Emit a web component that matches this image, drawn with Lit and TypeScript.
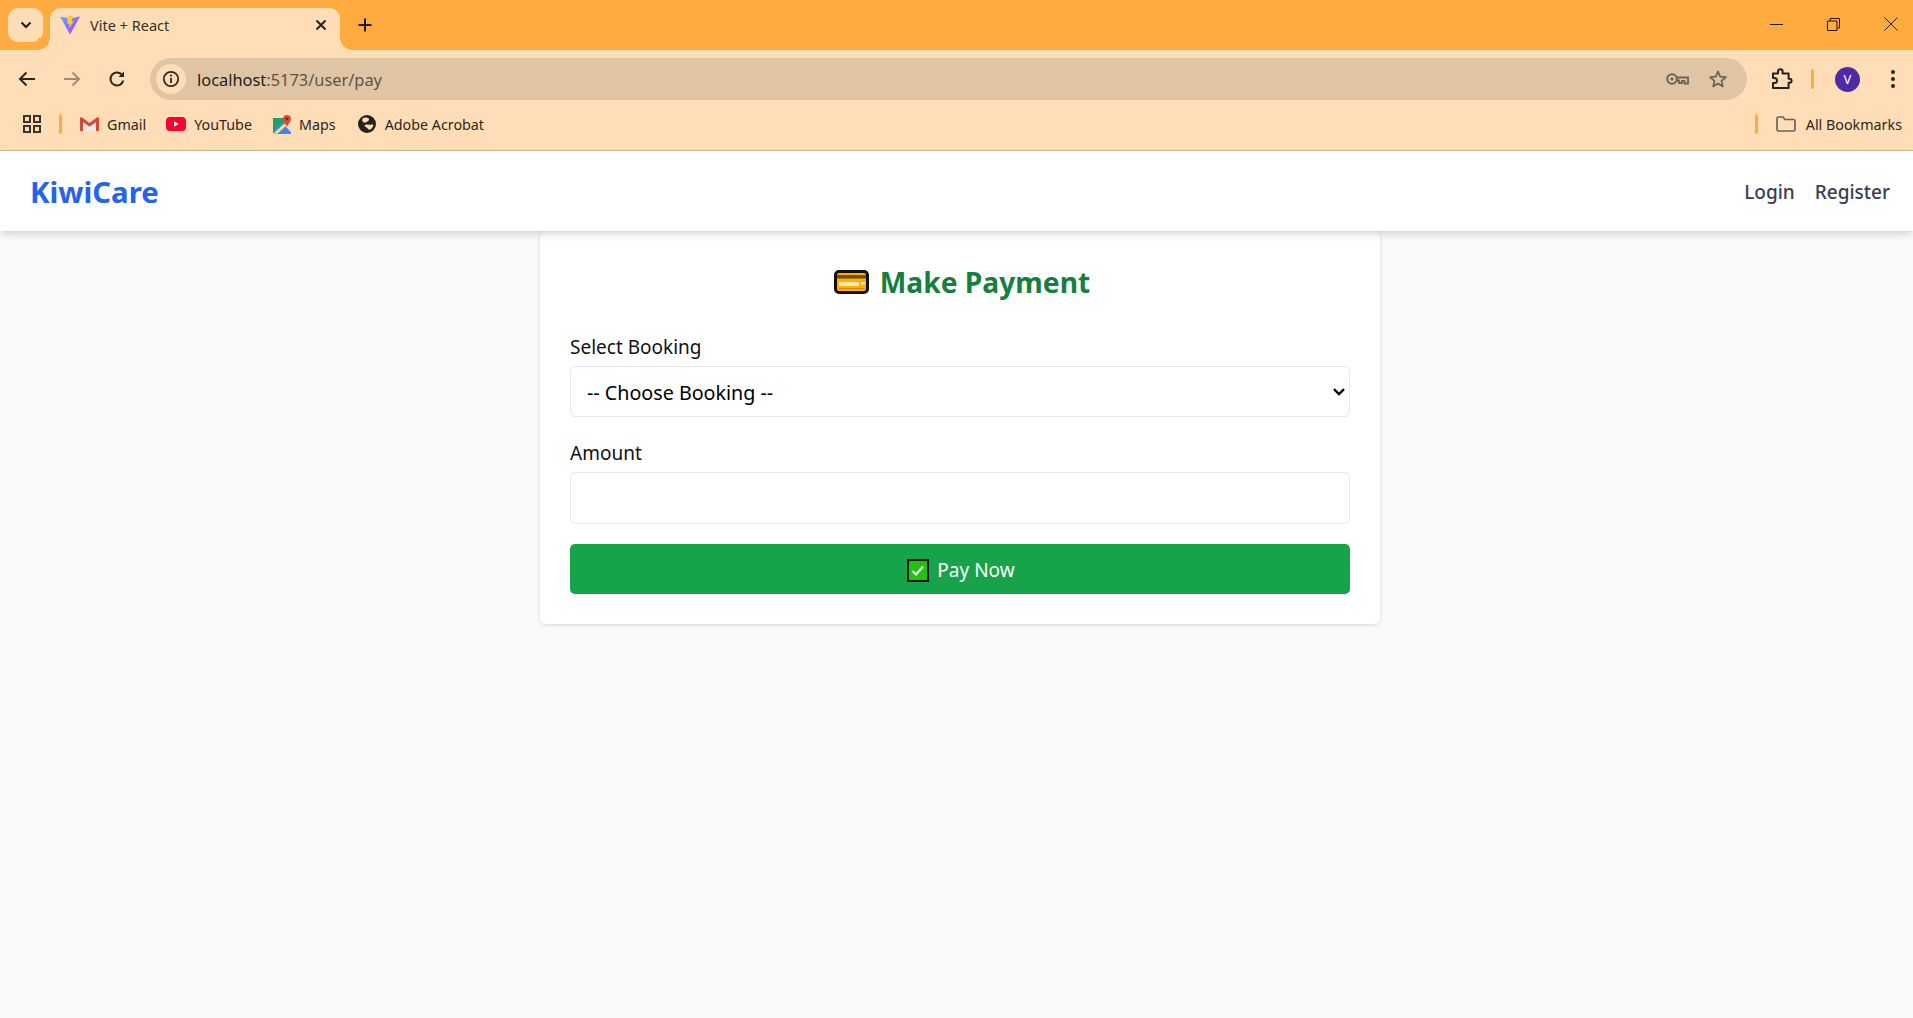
import { html, css, LitElement } from "lit";
import { customElement } from "lit/decorators.js";

@customElement("browser-chrome")
class BrowserChrome extends LitElement {
    static styles = css`
        :host {
            display: block;
            font-family: "Noto Sans", "Open Sans", sans-serif;
            color: #2b2620;
        }

        svg {
            display: block;
            flex: none;
        }

        .strip {
            display: flex;
            align-items: flex-start;
            height: 50px;
            background: #ffab40;
            padding-left: 8px;
            box-sizing: border-box;
        }

        .tab-search {
            display: flex;
            align-items: center;
            justify-content: center;
            width: 35px;
            height: 34px;
            margin-top: 8px;
            border-radius: 10px;
            background: #ffddb6;
        }

        .tab {
            position: relative;
            display: flex;
            align-items: center;
            width: 290px;
            height: 42px;
            margin: 8px 0 0 7px;
            padding: 0 0 8px 10px;
            box-sizing: border-box;
            border-radius: 11px 11px 0 0;
            background: #ffddb6;
        }

        .tab::before,
        .tab::after {
            content: "";
            position: absolute;
            bottom: 0;
            width: 12px;
            height: 12px;
        }

        .tab::before {
            left: -12px;
            background: radial-gradient(circle at 0 0, #ffab40 11.5px, #ffddb6 12px);
        }

        .tab::after {
            right: -12px;
            background: radial-gradient(circle at 100% 0, #ffab40 11.5px, #ffddb6 12px);
        }

        .tab-title {
            flex: 1;
            margin-left: 10px;
            font-size: 14.5px;
            color: #33302b;
        }

        .tab-close {
            margin-right: 13px;
        }

        .new-tab {
            margin: 18px 0 0 18px;
        }

        .window-controls {
            display: flex;
            align-items: center;
            margin: 17px 15px 0 auto;
            gap: 44px;
        }

        .toolbar {
            display: flex;
            align-items: center;
            height: 50px;
            background: #ffddb6;
            padding: 8px 17px 0 17px;
            box-sizing: border-box;
        }

        .nav-icons {
            display: flex;
            align-items: center;
            gap: 25px;
        }

        .omnibox {
            display: flex;
            align-items: center;
            flex: 1;
            height: 42px;
            margin: 0 24px 0 23px;
            border-radius: 21px;
            background: #dfc5a3;
            padding: 0 19px 0 6px;
        }

        .info {
            display: flex;
            align-items: center;
            justify-content: center;
            width: 30px;
            height: 30px;
            border-radius: 50%;
            background: #ffddb6;
        }

        .url {
            flex: 1;
            margin-left: 11px;
            font-size: 16.4px;
            color: #5f5448;
        }

        .url b {
            font-weight: 400;
            color: #24211d;
        }

        .omni-icons {
            display: flex;
            align-items: center;
            gap: 19px;
        }

        .toolbar-divider {
            width: 3px;
            height: 20px;
            margin: 0 21px 0 18px;
            border-radius: 2px;
            background: #ffab40;
        }

        .avatar {
            display: flex;
            align-items: center;
            justify-content: center;
            width: 25px;
            height: 25px;
            margin-right: 30px;
            border-radius: 50%;
            background: #4e2aa5;
            color: #fff;
            font-size: 13px;
        }

        .bookmarks {
            display: flex;
            align-items: center;
            height: 51px;
            padding: 0 11px 2px 23px;
            box-sizing: border-box;
            background: #ffddb6;
            border-bottom: 1px solid #cfb594;
            font-size: 14.3px;
        }

        .bm-divider {
            width: 3px;
            height: 20px;
            border-radius: 2px;
            background: #ffab40;
        }

        .bm-divider.first {
            margin: 0 18px 0 18px;
        }

        .bm-divider.last {
            margin: 0 18px 0 auto;
        }

        .bm {
            display: flex;
            align-items: center;
            gap: 8px;
            margin-right: 20px;
        }

        .bm.youtube {
            margin-right: 21px;
        }

        .bm.maps {
            margin-right: 22px;
        }

        .bm.adobe {
            gap: 9px;
        }

        .bm.all {
            margin: 0;
            gap: 10px;
        }
    `;

    render() {
        return html`
            <div class="strip">
                <div class="tab-search">
                    <svg width="12" height="8" viewBox="0 0 12 8"><path d="M1.500 1.500 6 6l4.500-4.500" fill="none" stroke="#1f1b16" stroke-width="2"/></svg>
                </div>
                <div class="tab">
                    <svg width="20" height="20" viewBox="0 0 20 20">
                        <defs>
                            <linearGradient id="vite" x1="0" y1="0" x2="1" y2="1">
                                <stop offset="0" stop-color="#5fa8ff"/>
                                <stop offset="1" stop-color="#bd34fe"/>
                            </linearGradient>
                        </defs>
                        <path d="M0 1.500 10 3.500 20 1.500 10 19.500Z" fill="url(#vite)"/>
                        <path d="M13.500 0 7 1.500 7.500 9 9.500 8.500 9 13 14 6 11.500 6.500Z" fill="#ffd028"/>
                    </svg>
                    <span class="tab-title">Vite + React</span>
                    <svg class="tab-close" width="12" height="12" viewBox="0 0 12 12"><path d="M1.500 1.500l9 9m0-9-9 9" stroke="#1f1b16" stroke-width="1.800"/></svg>
                </div>
                <svg class="new-tab" width="14" height="14" viewBox="0 0 14 14"><path d="M7 .5v13M.5 7h13" stroke="#1f1b16" stroke-width="2"/></svg>
                <div class="window-controls">
                    <svg width="13" height="13" viewBox="0 0 13 13"><path d="M0 6.500h13" stroke="#1f1b16" stroke-width="1"/></svg>
                    <svg width="13" height="13" viewBox="0 0 13 13"><path d="M.5 3h9.500v9.500H.5zM3 3V.5h9.500V10H10" fill="none" stroke="#1f1b16"/></svg>
                    <svg width="14" height="14" viewBox="0 0 14 14"><path d="M.5.5l13 13m0-13-13 13" stroke="#1f1b16"/></svg>
                </div>
            </div>

            <div class="toolbar">
                <div class="nav-icons">
                    <svg width="20" height="20" viewBox="0 0 20 20"><path d="M18 10H3M9.500 3.500 3 10l6.500 6.500" fill="none" stroke="#2b2620" stroke-width="2"/></svg>
                    <svg width="20" height="20" viewBox="0 0 20 20"><path d="M2 10h15M10.500 3.500 17 10l-6.500 6.500" fill="none" stroke="#a08d78" stroke-width="2"/></svg>
                    <svg width="20" height="20" viewBox="0 0 20 20"><path d="M16.300 11.500A6.500 6.500 0 1 1 14.500 5.300" fill="none" stroke="#2b2620" stroke-width="2"/><path d="M17 2.500V8h-5.500z" fill="#2b2620"/></svg>
                </div>
                <div class="omnibox">
                    <div class="info">
                        <svg width="18" height="18" viewBox="0 0 18 18"><circle cx="9" cy="9" r="7.200" fill="none" stroke="#2b2620" stroke-width="1.700"/><path d="M9 8v5" stroke="#2b2620" stroke-width="1.800"/><circle cx="9" cy="5.600" r="1.100" fill="#2b2620"/></svg>
                    </div>
                    <span class="url"><b>localhost</b>:5173/user/pay</span>
                    <div class="omni-icons">
                        <svg width="23" height="14" viewBox="0 0 23 14"><circle cx="6" cy="7" r="4.800" fill="none" stroke="#6b6259" stroke-width="2"/><circle cx="6" cy="7" r="1.600" fill="#6b6259"/><path d="M11 5.500h11v6h-3.500V9H16v2h-3V8.500h-2" fill="none" stroke="#6b6259" stroke-width="1.800"/></svg>
                        <svg width="20" height="20" viewBox="0 0 20 20"><path d="M10 2.500 12.200 7.700 17.800 8.200 13.500 11.900 14.800 17.400 10 14.500 5.200 17.400 6.500 11.900 2.200 8.200 7.800 7.700Z" fill="none" stroke="#6b6259" stroke-width="1.800" stroke-linejoin="round"/></svg>
                    </div>
                </div>
                <svg width="22" height="22" viewBox="0 0 22 22"><path d="M2 5.500h5V3.500a2.300 2.300 0 0 1 4.600 0v2h6v5.200h1a2 2 0 0 1 0 4h-1V20H2v-5h1.500a2.500 2.500 0 0 0 0-5H2z" fill="none" stroke="#26221d" stroke-width="2" stroke-linejoin="round"/></svg>
                <div class="toolbar-divider"></div>
                <div class="avatar">V</div>
                <svg width="6" height="20" viewBox="0 0 6 20"><circle cx="3" cy="3" r="2" fill="#26221d"/><circle cx="3" cy="10" r="2" fill="#26221d"/><circle cx="3" cy="17" r="2" fill="#26221d"/></svg>
            </div>

            <div class="bookmarks">
                <svg width="18" height="18" viewBox="0 0 18 18"><path d="M1 1h6v6H1zM11 1h6v6h-6zM1 11h6v6H1zM11 11h6v6h-6z" fill="none" stroke="#3a352f" stroke-width="2"/></svg>
                <div class="bm-divider first"></div>
                <div class="bm">
                    <svg width="19" height="14" viewBox="0 0 19 14"><path d="M1 2 9.500 8 18 2v12H1z" fill="#eee9e4"/><path d="M0 1.500C0 .2 1.300 0 2.200.6L9.500 6 16.800.6C17.700 0 19 .2 19 1.500V14h-3V5L9.500 9.800 3 5v9H0z" fill="#d34a3c"/></svg>
                    <span>Gmail</span>
                </div>
                <div class="bm youtube">
                    <svg width="20" height="14" viewBox="0 0 20 14"><rect width="20" height="14" rx="4" fill="#ff0033"/><path d="M8 4.300v5.400L12.500 7z" fill="#fff"/></svg>
                    <span>YouTube</span>
                </div>
                <div class="bm maps">
                    <svg width="18" height="19" viewBox="0 0 18 19">
                        <path d="M0 3h12v6L1 18H0z" fill="#1ea362"/>
                        <path d="M0 16 9 8l9 9v2H2z" fill="#4285f4"/>
                        <path d="M1 18 12 8l2 2L4 19z" fill="#fbe36a"/>
                        <path d="M14 0a4 4 0 0 1 4 4c0 3-3 5-4 8-1-3-4-5-4-8a4 4 0 0 1 4-4z" fill="#dd4b3e"/>
                        <circle cx="14" cy="4" r="1.400" fill="#7d2018"/>
                    </svg>
                    <span>Maps</span>
                </div>
                <div class="bm adobe">
                    <svg width="18" height="18" viewBox="0 0 18 18"><circle cx="9" cy="9" r="9" fill="#26221d"/><path d="M4.500 3.500C7 2 10 2.500 11 4c.5 1.500-2 3-3.500 3.500S3.500 7 4.500 3.500zM7 10c2-1.500 4 .5 6.500-.5 1.500-.5 2 .5 1.500 2-1 2.500-3 3.500-4.500 3-1-1-1.500-2-3.500-3-.5-.5-.5-1 0-1.500z" fill="#ffddb6"/></svg>
                    <span>Adobe Acrobat</span>
                </div>
                <div class="bm-divider last"></div>
                <div class="bm all">
                    <svg width="20" height="16" viewBox="0 0 20 16"><path d="M1 2.500A1.500 1.500 0 0 1 2.500 1H7l2 2.500h8.500A1.500 1.500 0 0 1 19 5v8.500a1.500 1.500 0 0 1-1.500 1.500h-15A1.500 1.500 0 0 1 1 13.500z" fill="none" stroke="#6b6259" stroke-width="1.700"/></svg>
                    <span>All Bookmarks</span>
                </div>
            </div>
        `;
    }
}

@customElement("app-root")
class AppRoot extends LitElement {
    static styles = css`
        :host {
            display: block;
            min-height: 1018px;
            background: #f9fafb;
            font-family: "Noto Sans", "Open Sans", sans-serif;
        }

        svg {
            display: block;
            flex: none;
        }

        .navbar {
            position: relative;
            z-index: 1;
            display: flex;
            align-items: center;
            justify-content: space-between;
            height: 80px;
            box-sizing: border-box;
            padding: 2px 23px 0 30px;
            background: #fff;
            box-shadow: 0 5px 8px -1px rgba(0, 0, 0, 0.12), 0 2px 4px -2px rgba(0, 0, 0, 0.1);
        }

        .logo {
            font-size: 29.4px;
            font-weight: 700;
            color: #2563eb;
        }

        .links {
            display: flex;
            gap: 20px;
            font-size: 19px;
            font-weight: 500;
            color: #374151;
        }

        .card {
            width: 840px;
            margin: 0 0 0 540px;
            padding: 31px 30px 30px;
            box-sizing: border-box;
            background: #fff;
            border-radius: 6px;
            box-shadow: 0 1px 4px rgba(0, 0, 0, 0.14);
        }

        h2 {
            display: flex;
            align-items: center;
            justify-content: center;
            gap: 11px;
            height: 40px;
            margin: 0 0 29px;
            padding-left: 4px;
            font-size: 28.2px;
            font-weight: 700;
            color: #15803d;
        }

        form {
            display: flex;
            flex-direction: column;
            gap: 20px;
        }

        label {
            display: block;
            margin-bottom: 3px;
            line-height: 32px;
            font-size: 19px;
            color: #111;
        }

        select,
        input {
            display: block;
            width: 100%;
            box-sizing: border-box;
            border: 1px solid #e5e7eb;
            border-radius: 5px;
            background: #fff;
            font-family: inherit;
            font-size: 19.7px;
            color: #000;
            padding: 0 16px;
            outline: none;
        }

        select {
            height: 51px;
            padding-top: 2px;
            appearance: none;
            background: #fff url("data:image/svg+xml,%3Csvg xmlns='http://www.w3.org/2000/svg' width='12' height='8' viewBox='0 0 12 8'%3E%3Cpath d='M1 1.200 6 6l5-4.800' fill='none' stroke='%23000' stroke-width='2.400'/%3E%3C/svg%3E") no-repeat right 4px center;
        }

        input {
            height: 52px;
        }

        button {
            display: flex;
            align-items: center;
            justify-content: center;
            gap: 8px;
            height: 50px;
            padding: 2px 0 0 2px;
            border: none;
            border-radius: 5px;
            background: #16a34a;
            color: #fff;
            font-family: inherit;
            font-size: 19px;
        }
    `;

    render() {
        return html`
            <browser-chrome></browser-chrome>
            <nav class="navbar">
                <span class="logo">KiwiCare</span>
                <div class="links">
                    <span>Login</span>
                    <span>Register</span>
                </div>
            </nav>
            <main class="card">
                <h2>
                    <svg width="35" height="24" viewBox="0 0 35 24">
                        <rect x="1.500" y="1.500" width="32" height="21" rx="3.500" fill="#ffb000" stroke="#111" stroke-width="3"/>
                        <rect x="3" y="5" width="29" height="3.500" fill="#6d4a1f"/>
                        <rect x="5" y="12" width="20" height="4" fill="#ffe9b0"/>
                        <rect x="27" y="12" width="4" height="2.500" fill="#ffe9b0"/>
                        <rect x="5" y="18" width="26" height="1" fill="#d18a00"/>
                    </svg>
                    Make Payment
                </h2>
                <form>
                    <div>
                        <label>Select Booking</label>
                        <select>
                            <option>-- Choose Booking --</option>
                        </select>
                    </div>
                    <div>
                        <label>Amount</label>
                        <input type="number" />
                    </div>
                    <button type="button">
                        <svg width="22" height="23" viewBox="0 0 22 23">
                            <rect x="1" y="1" width="20" height="21" fill="#1fc40c" stroke="#111" stroke-width="2"/>
                            <path d="M5.500 12l3.500 3.500 7-8" fill="none" stroke="#fff" stroke-width="2"/>
                        </svg>
                        Pay Now
                    </button>
                </form>
            </main>
        `;
    }
}

export default AppRoot;
export { BrowserChrome };
